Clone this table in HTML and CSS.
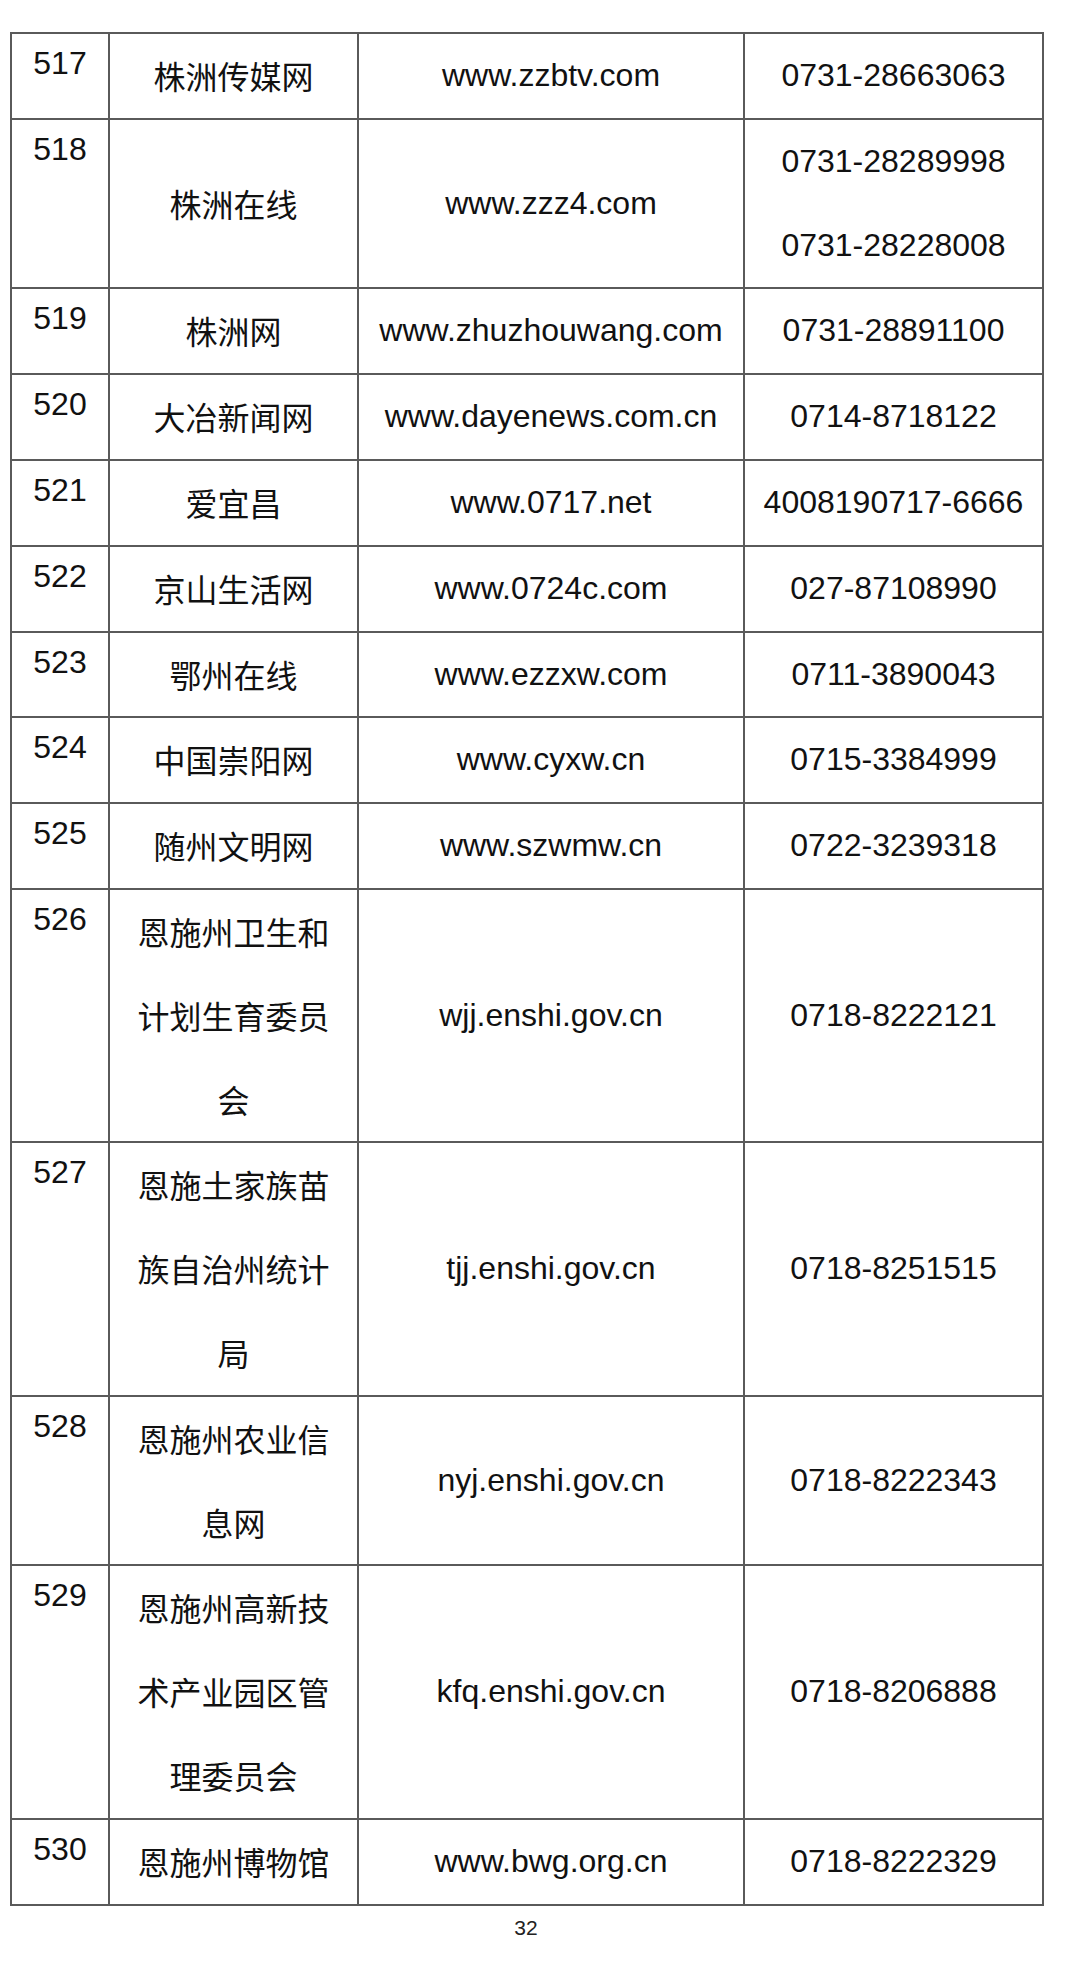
FILE: index.html
```html
<!DOCTYPE html>
<html lang="zh-CN">
<head>
<meta charset="utf-8">
<title>网站名单 32</title>
<link rel="stylesheet" href="styles.css">
</head>
<body>
<div class="page">
  <table class="sites">
    <colgroup>
      <col class="c-no">
      <col class="c-name">
      <col class="c-url">
      <col class="c-tel">
    </colgroup>
    <tbody>
      <tr><td class="no">517</td><td class="name">株洲传媒网</td><td class="url">www.zzbtv.com</td><td class="tel">0731-28663063</td></tr>
      <tr><td class="no">518</td><td class="name">株洲在线</td><td class="url">www.zzz4.com</td><td class="tel">0731-28289998<br>0731-28228008</td></tr>
      <tr><td class="no">519</td><td class="name">株洲网</td><td class="url">www.zhuzhouwang.com</td><td class="tel">0731-28891100</td></tr>
      <tr><td class="no">520</td><td class="name">大冶新闻网</td><td class="url">www.dayenews.com.cn</td><td class="tel">0714-8718122</td></tr>
      <tr><td class="no">521</td><td class="name">爱宜昌</td><td class="url">www.0717.net</td><td class="tel">4008190717-6666</td></tr>
      <tr><td class="no">522</td><td class="name">京山生活网</td><td class="url">www.0724c.com</td><td class="tel">027-87108990</td></tr>
      <tr><td class="no">523</td><td class="name">鄂州在线</td><td class="url">www.ezzxw.com</td><td class="tel">0711-3890043</td></tr>
      <tr><td class="no">524</td><td class="name">中国崇阳网</td><td class="url">www.cyxw.cn</td><td class="tel">0715-3384999</td></tr>
      <tr><td class="no">525</td><td class="name">随州文明网</td><td class="url">www.szwmw.cn</td><td class="tel">0722-3239318</td></tr>
      <tr><td class="no">526</td><td class="name">恩施州卫生和计划生育委员会</td><td class="url">wjj.enshi.gov.cn</td><td class="tel">0718-8222121</td></tr>
      <tr><td class="no">527</td><td class="name">恩施土家族苗族自治州统计局</td><td class="url">tjj.enshi.gov.cn</td><td class="tel">0718-8251515</td></tr>
      <tr><td class="no">528</td><td class="name">恩施州农业信息网</td><td class="url">nyj.enshi.gov.cn</td><td class="tel">0718-8222343</td></tr>
      <tr><td class="no">529</td><td class="name">恩施州高新技术产业园区管理委员会</td><td class="url">kfq.enshi.gov.cn</td><td class="tel">0718-8206888</td></tr>
      <tr><td class="no">530</td><td class="name">恩施州博物馆</td><td class="url">www.bwg.org.cn</td><td class="tel">0718-8222329</td></tr>
    </tbody>
  </table>
  <div class="folio">32</div>
</div>
</body>
</html>
```

FILE: styles.css
```css
html, body {
  margin: 0;
  padding: 0;
  background: #ffffff;
}

body {
  width: 1080px;
  color: #111111;
  font-family: "Liberation Sans", Arial, "Noto Sans CJK SC", sans-serif;
}

.page {
  padding: 32px 0 0 10px;
}

.sites {
  border-collapse: collapse;
  table-layout: fixed;
  width: 1032px;
  font-size: 32px;
}

.c-no { width: 98px; }
.c-name { width: 249px; }
.c-url { width: 386px; }
.c-tel { width: 299px; }

.sites td {
  border: 2px solid #5a5a5a;
  padding: 0;
  text-align: center;
  line-height: 83.8px;
  vertical-align: middle;
}

.sites td.no {
  vertical-align: top;
  line-height: 58px;
}

.sites td.name {
  padding: 0 20px;
  font-family: "Noto Sans CJK SC", "Liberation Sans", sans-serif;
  font-size: 32px;
  word-break: break-all;
}

.sites td.url {
  padding: 0 6px;
}

.sites td.tel {
  padding: 0 6px;
}

.folio {
  width: 1032px;
  text-align: center;
  font-size: 21px;
  line-height: 24px;
  margin-top: 10px;
  color: #222;
}
```
